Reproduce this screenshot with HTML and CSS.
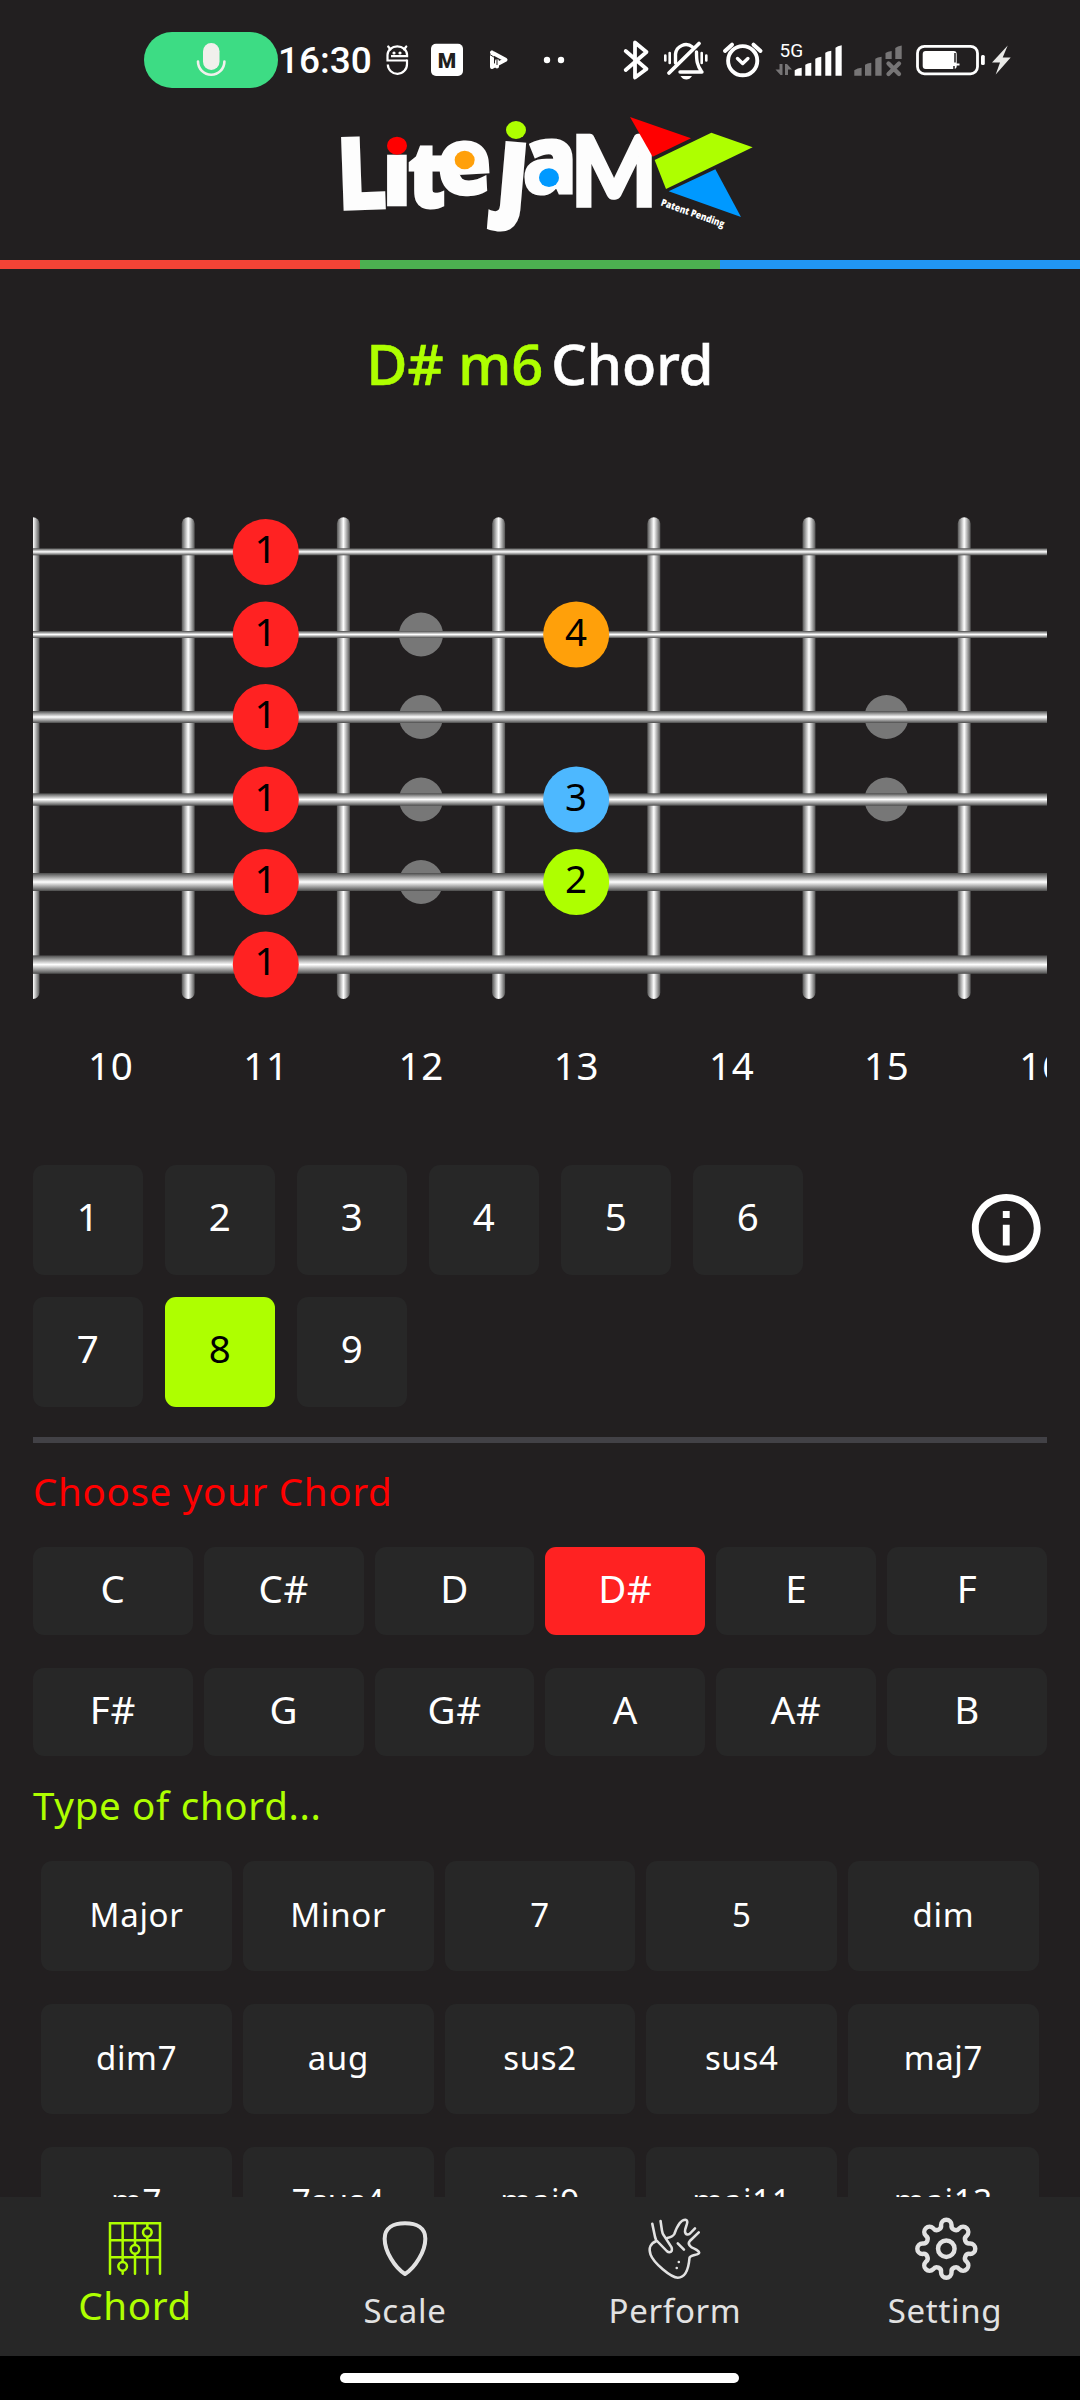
FILE: index.html
```html
<!DOCTYPE html>
<html lang="en">
<head>
<meta charset="utf-8">
<title>Litejam Chords</title>
<link rel="stylesheet" href="styles.css">
</head>
<body>
<div class="app">
  <header class="status">
    <div class="mic-pill">
      <svg width="32" height="36" viewBox="0 0 32 36">
        <rect x="8" y="1" width="16.500" height="27" rx="8.200" fill="#f1f0ec"/>
        <path d="M3 19.500a13.200 13.200 0 0 0 26.400 0" fill="none" stroke="#f1f0ec" stroke-width="2.600" stroke-linecap="round"/>
      </svg>
    </div>
    <span class="clock">16:30</span>
    <svg class="status-left" width="220" height="90" viewBox="380 20 220 90">
      <g fill="none" stroke="#fff" stroke-width="2.200">
        <path d="M407 60.500H387.500V55a9.800 8.600 0 0 1 19.600 0v1.200H391"/>
        <path d="M407 59.500v4.500a9.600 9.600 0 0 1-19.200 0.500"/>
        <path d="M390.500 49.500l-2.300-3M404 49.500l2.300-3" stroke-linecap="round"/>
        <circle cx="394" cy="53" r=".9" fill="#fff" stroke-width="1.400"/>
        <circle cx="400" cy="53" r=".9" fill="#fff" stroke-width="1.400"/>
      </g>
      <rect x="431" y="43.700" width="32" height="32.300" rx="5" fill="#fff"/>
      <text class="badge-m" x="447" y="67.500" text-anchor="middle">M</text>
      <path d="M492 52.500v14.500M492 52.500L505.500 59.800 492 67M497 66.500v-5.500" fill="none" stroke="#fff" stroke-width="4" stroke-linejoin="round" stroke-linecap="round"/>
      <path d="M489 54l8 5v6" fill="none" stroke="#221f20" stroke-width="1"/>
      <circle cx="547" cy="60" r="3.200" fill="#fff"/>
      <circle cx="561" cy="60" r="3.200" fill="#fff"/>
    </svg>
    <svg class="status-right" width="470" height="90" viewBox="590 20 470 90">
      <g fill="none" stroke="#fff" stroke-linecap="round" stroke-linejoin="round">
        <path d="M625.700 51L646.500 69 635 77.500V42.500L646.500 52 625.700 70" stroke-width="3.800"/>
        <path d="M675.500 63V54a10.500 10.500 0 0 1 17-7M696.500 52c0 9 .5 13 5 19.500M680 72h22" stroke-width="3.400"/>
        <path d="M669 73L699 43.500" stroke-width="3.800"/>
        <path d="M665.300 55.500v5M669.700 53v10M701.700 53v10M706.300 55.500v5" stroke-width="2.600"/>
        <circle cx="742.700" cy="60.700" r="14.600" stroke-width="3.900"/>
        <path d="M737.500 58.500l5.200 5 5.200-5" stroke-width="3.400"/>
        <path d="M725 51l7-6.300M753.500 44.700l7 6.300" stroke-width="4"/>
      </g>
      <path d="M680.500 76h11.500q-2.200 3.500-5.700 3.500t-5.800-3.500z" fill="#fff"/>
      <text class="net" x="779.500" y="57">5G</text>
      <g fill="#777576">
        <path d="M779.500 64h3v11h-2l-5-5.500h4zM785 75h3v-5.500h4l-5-5.500h-2z"/>
      </g>
      <g fill="#fff">
        <path d="M794.700 75.800v-5.500q3-2.200 7-2.500v8zM805.300 75.800v-11q2-1.500 6-2v13zM815.300 75.800v-17q2-1.500 6-2v19zM825.300 75.800v-23q2-1.500 6-2v25zM835.500 75.800v-28q2-1.800 6.200-2.500v30.500z"/>
      </g>
      <g fill="#777576">
        <path d="M854.300 75.800v-5.500q3-2.200 7.300-2.500v8zM865 75.800v-11q2-1.500 6.300-2v13zM875.300 75.800v-17q2-1.500 6.300-2v19zM885.500 59v-6q2-1.500 6.200-2v8zM895.300 59v-11q2-1.800 6.400-2.500v13.500z"/>
      </g>
      <path d="M888.500 63.500l10.500 10.500M899 63.500l-10.500 10.500" stroke="#777576" stroke-width="4.300" stroke-linecap="round"/>
      <rect x="917.500" y="46.300" width="60" height="27.500" rx="7" fill="none" stroke="#fff" stroke-width="2.800"/>
      <rect x="922.700" y="51" width="34" height="18" rx="3" fill="#fff"/>
      <path d="M955 53v9.500M954 66v3" stroke="#221f20" stroke-width="1.500"/>
      <path d="M955 64.500h4.500" stroke="#fff" stroke-width="2"/>
      <rect x="981" y="55" width="3.800" height="10" rx="1.500" fill="#fff"/>
      <path d="M1007.700 45.500L992 62.500h8l-4.300 12L1010.700 57.500h-8z" fill="#e9e9e7"/>
    </svg>
  </header>

  <div class="brand">
    <svg width="460" height="160" viewBox="0 0 1380 480" role="img" aria-label="Litejam, Patent Pending">
      <g class="wordmark">
        <text transform="translate(54 329) rotate(-2)" font-size="300" textLength="150" lengthAdjust="spacingAndGlyphs">L</text>
        <text transform="translate(187 316)" font-size="268" textLength="88" lengthAdjust="spacingAndGlyphs">ı</text>
        <text class="heavy" transform="translate(264 321)" font-size="272" textLength="112" lengthAdjust="spacingAndGlyphs">t</text>
        <text class="heavy" transform="translate(356 286) rotate(-3)" font-size="276" textLength="162" lengthAdjust="spacingAndGlyphs">e</text>
        <text class="heavy" transform="translate(526 309) rotate(5)" font-size="332" textLength="92" lengthAdjust="spacingAndGlyphs">ȷ</text>
        <text class="heavy" transform="translate(608 279)" font-size="280" textLength="162" lengthAdjust="spacingAndGlyphs">a</text>
        <text class="cap-m" transform="translate(753 319)" font-size="292" textLength="258" lengthAdjust="spacingAndGlyphs">M</text>
      </g>
      <ellipse cx="231" cy="137" rx="30" ry="27" fill="#f00"/>
      <ellipse cx="434" cy="180" rx="30" ry="28" fill="#ffa00a"/>
      <ellipse cx="588" cy="90" rx="30" ry="27" fill="#aeff00"/>
      <ellipse cx="687" cy="233" rx="30" ry="28" fill="#0099ff"/>
      <path d="M930 51l183 64-115 55z" fill="#f00"/>
      <path d="M1174 98l124 44-260 125-34-87z" fill="#aeff00"/>
      <path d="M1186 208l77 143-217-77z" fill="#0099ff"/>
      <text class="patent" transform="translate(1021 316) rotate(19.500)" textLength="200" lengthAdjust="spacingAndGlyphs">Patent Pending</text>
    </svg>
  </div>
  <div class="stripe"><i class="s-red"></i><i class="s-green"></i><i class="s-blue"></i></div>

  <main class="content">
    <h1 class="title"><span class="lime">D# m6</span><span>Chord</span></h1>

    <svg class="fretboard" width="1014" height="600" viewBox="33 500 1014 600">
      <defs>
        <linearGradient id="fret"><stop offset="0" stop-color="#555"/><stop offset=".5" stop-color="#fff"/><stop offset="1" stop-color="#555"/></linearGradient>
        <linearGradient id="wire" x2="0" y2="1"><stop offset="0" stop-color="#4c4c4c"/><stop offset=".5" stop-color="#fff"/><stop offset="1" stop-color="#4c4c4c"/></linearGradient>
      </defs>
      <g fill="url(#fret)">
        <rect x="26.500" y="517.300" width="13" height="481.700" rx="6.500"/>
        <rect x="181.700" y="517.300" width="13" height="481.700" rx="6.500"/>
        <rect x="336.900" y="517.300" width="13" height="481.700" rx="6.500"/>
        <rect x="492.100" y="517.300" width="13" height="481.700" rx="6.500"/>
        <rect x="647.300" y="517.300" width="13" height="481.700" rx="6.500"/>
        <rect x="802.500" y="517.300" width="13" height="481.700" rx="6.500"/>
        <rect x="957.700" y="517.300" width="13" height="481.700" rx="6.500"/>
      </g>
      <g fill="#777">
        <circle cx="421" cy="634.500" r="22"/><circle cx="421" cy="717" r="22"/><circle cx="421" cy="799.500" r="22"/><circle cx="421" cy="882" r="22"/>
        <circle cx="886.500" cy="717" r="22"/><circle cx="886.500" cy="799.500" r="22"/>
      </g>
      <g fill="url(#wire)">
        <rect x="33" y="548.300" width="1014" height="7"/>
        <rect x="33" y="631" width="1014" height="7"/>
        <rect x="33" y="711" width="1014" height="12"/>
        <rect x="33" y="793.300" width="1014" height="12.400"/>
        <rect x="33" y="873" width="1014" height="18"/>
        <rect x="33" y="955.400" width="1014" height="18.400"/>
      </g>
      <g fill="#ff2222">
        <circle cx="265.800" cy="552" r="33"/><circle cx="265.800" cy="634.500" r="33"/><circle cx="265.800" cy="717" r="33"/><circle cx="265.800" cy="799.500" r="33"/><circle cx="265.800" cy="882" r="33"/><circle cx="265.800" cy="964.500" r="33"/>
      </g>
      <circle cx="576.200" cy="634.500" r="33" fill="#ffa00a"/>
      <circle cx="576.200" cy="799.500" r="33" fill="#4db8ff"/>
      <circle cx="576.200" cy="882" r="33" fill="#aeff00"/>
      <g class="finger">
        <text x="265.500" y="562.700">1</text><text x="265.500" y="645.700">1</text><text x="265.500" y="727.700">1</text><text x="265.500" y="810.700">1</text><text x="265.500" y="892.700">1</text><text x="265.500" y="975.200">1</text>
        <text x="576" y="645.500">4</text><text x="576" y="810.500">3</text><text x="576" y="892.700">2</text>
      </g>
      <g class="fret-no">
        <text x="110.800" y="1079.700">10</text><text x="266" y="1079.700">11</text><text x="421.200" y="1079.700">12</text><text x="576.500" y="1079.700">13</text><text x="731.700" y="1079.700">14</text><text x="886.800" y="1079.700">15</text><text x="1042" y="1079.700">16</text>
      </g>
    </svg>

    <section class="positions">
      <div class="pos-list">
        <button class="key">1</button><button class="key">2</button><button class="key">3</button><button class="key">4</button><button class="key">5</button><button class="key">6</button><button class="key">7</button><button class="key on-lime">8</button><button class="key">9</button>
      </div>
      <svg class="info" width="82.500" height="82.500" viewBox="0 0 24 24" fill="#fff"><path d="M11 7h2v2h-2zM11 11h2v6h-2zM12 2C6.480 2 2 6.480 2 12s4.480 10 10 10 10-4.480 10-10S17.520 2 12 2zm0 18c-4.410 0-8-3.590-8-8s3.590-8 8-8 8 3.590 8 8-3.590 8-8 8z"/></svg>
    </section>

    <hr class="rule">
    <h2 class="label red">Choose your Chord</h2>
    <div class="roots">
      <button class="key">C</button><button class="key">C#</button><button class="key">D</button><button class="key on-red">D#</button><button class="key">E</button><button class="key">F</button>
      <button class="key">F#</button><button class="key">G</button><button class="key">G#</button><button class="key">A</button><button class="key">A#</button><button class="key">B</button>
    </div>
    <h2 class="label lime type-label">Type of chord...</h2>
    <div class="types">
      <button class="key">Major</button><button class="key">Minor</button><button class="key">7</button><button class="key">5</button><button class="key">dim</button>
      <button class="key">dim7</button><button class="key">aug</button><button class="key">sus2</button><button class="key">sus4</button><button class="key">maj7</button>
      <button class="key">m7</button><button class="key">7sus4</button><button class="key">maj9</button><button class="key">maj11</button><button class="key">maj13</button>
    </div>
  </main>

  <nav class="tabs">
    <a class="tab active">
      <svg width="70" height="70" viewBox="240 280 210 210" fill="none" stroke="#aeff00" stroke-width="7.500" stroke-linecap="round">
        <path d="M270 462V311H420V462M308 311V462M345 311V462M382 311V462M270 362H420M270 413H420"/>
        <g fill="#272727"><circle cx="382" cy="338" r="13"/><circle cx="345" cy="389" r="13"/><circle cx="308" cy="440" r="13"/></g>
      </svg>
      <span>Chord</span>
    </a>
    <a class="tab">
      <svg width="70" height="70" viewBox="1050 280 210 210" fill="none" stroke="#e2e2e2" stroke-width="12" stroke-linejoin="round">
        <path d="M1155 463C1125 445 1094 395 1094 357C1094 325 1120 311 1155 311C1190 311 1216 325 1216 357C1216 395 1185 445 1155 463Z"/>
      </svg>
      <span>Scale</span>
    </a>
    <a class="tab">
      <svg width="70" height="70" viewBox="290.300 280 203.300 210" preserveAspectRatio="none" fill="none" stroke="#e2e2e2" stroke-width="7.500" stroke-linecap="round" stroke-linejoin="round">
        <path d="M350 304L354 332Q355 341 360 348L382 383Q386 396 376 398Q372 398 368 394L337 361L334 352L326 312"/>
        <path d="M369 355Q385 352 390 343C397 322 408 300 422 300C436 304 419 325 421 336C423 347 432 347 437 340L450 326"/>
        <path d="M461 338L435 364C426 374 440 384 448 387Q455 390 461 396Q465 401 456 404C448 407 435 408 434 415C432 440 424 474 400 474C380 474 330 430 321 405C314 385 322 370 338 364"/>
        <path d="M400 371L418 390M403 427v.1M397 445v.1"/>
      </svg>
      <span>Perform</span>
    </a>
    <a class="tab">
      <svg width="70" height="70" viewBox="-36.300 -35.700 70 70" fill="none" stroke="#e2e2e2">
        <g transform="scale(.95)" stroke-width="4.700">
          <path d="M-5.500 -25A5.500 5.500 0 0 1 5.500 -25A4.600 4.600 0 0 0 13.790 -21.570A5.500 5.500 0 0 1 21.570 -13.790A4.600 4.600 0 0 0 25 -5.500A5.500 5.500 0 0 1 25 5.500A4.600 4.600 0 0 0 21.570 13.790A5.500 5.500 0 0 1 13.790 21.570A4.600 4.600 0 0 0 5.500 25A5.500 5.500 0 0 1 -5.500 25A4.600 4.600 0 0 0 -13.790 21.570A5.500 5.500 0 0 1 -21.570 13.790A4.600 4.600 0 0 0 -25 5.500A5.500 5.500 0 0 1 -25 -5.500A4.600 4.600 0 0 0 -21.570 -13.790A5.500 5.500 0 0 1 -13.790 -21.570A4.600 4.600 0 0 0 -5.500 -25Z"/>
          <circle r="8.700"/>
        </g>
      </svg>
      <span>Setting</span>
    </a>
  </nav>
  <footer class="gesture"><i></i></footer>
</div>
</body>
</html>
```

FILE: styles.css
```css
* { box-sizing: border-box; }
body { margin: 0; background: #221f20; color: #fff; font-family: "Noto Sans", sans-serif; }
.app { width: 1080px; height: 2400px; display: flex; flex-direction: column; overflow: hidden; }
svg { display: block; flex: none; }

.status { height: 100px; flex: none; display: flex; align-items: flex-start; padding-left: 144px; }
.mic-pill { width: 134px; height: 56px; margin-top: 32px; border-radius: 28px; background: #3ddc84; display: flex; align-items: center; justify-content: center; }
.clock { width: 102px; margin-top: 37px; font: 500 37px/48px Roboto, sans-serif; white-space: nowrap; }
.status-left { margin-top: 20px; margin-right: -10px; }
.status-right { margin-top: 20px; }
.badge-m { font: 900 21px Roboto, sans-serif; fill: #221f20; }
.net { font: 400 19px Roboto, sans-serif; fill: #fff; }

.brand { height: 160px; flex: none; padding-left: 320px; }
.wordmark { font-family: "Open Sans", "Noto Sans", sans-serif; font-weight: 800; fill: #fdfdfd; stroke: #fdfdfd; stroke-width: 7; }
.wordmark .heavy { stroke-width: 9; }
.wordmark .cap-m { font-family: Lato, sans-serif; font-weight: 900; stroke-width: 10; }
.patent { font: 800 30px "Open Sans", sans-serif; fill: #fff; }
.stripe { height: 9px; flex: none; display: grid; grid-template-columns: repeat(3, 1fr); }
.s-red { background: #f44336; }
.s-green { background: #4caf50; }
.s-blue { background: #2196f3; }

.content { flex: 1; min-height: 0; overflow: hidden; padding: 54px 33px 0; }
.title { display: flex; justify-content: center; gap: 8px; margin: 0 0 97px; font-size: 56px; line-height: 80px; font-weight: 500; -webkit-text-stroke: .6px currentColor; }
.lime { color: #aeff00; }
.red { color: #f00; }
.finger text, .fret-no text { font-size: 38.5px; text-anchor: middle; }
.finger { fill: #000; }
.fret-no { fill: #fff; letter-spacing: .6875px; }

.positions { display: flex; justify-content: space-between; align-items: flex-start; margin-top: 65px; }
.pos-list { display: grid; grid-template-columns: repeat(6, 110px); grid-auto-rows: 110px; gap: 22px; }
.info { margin-top: 22px; }
.key { border: 0; margin: 0; padding: 0 0 8px; border-radius: 11px; background: #272727; color: #fff; font: 400 38.5px/44px "Noto Sans", sans-serif; letter-spacing: .6875px; text-align: center; }
.on-lime { background: #aeff00; color: #000; }
.on-red { background: #ff2222; }

.rule { height: 6px; border: 0; margin: 30px 0 23px; background: #424146; }
.label { margin: 0 0 31px; font-size: 38.5px; line-height: 50px; font-weight: 400; letter-spacing: .6875px; }
.roots { display: grid; grid-template-columns: repeat(6, 1fr); grid-auto-rows: 88px; gap: 33px 11px; }
.roots .key { padding-bottom: 7px; }
.type-label { margin-top: 24px; }
.types { display: grid; grid-template-columns: repeat(5, 1fr); grid-auto-rows: 110px; gap: 33px 11px; padding: 0 8.25px; }
.types .key { font-size: 33px; padding-bottom: 3px; }

.tabs { height: 159px; flex: none; display: grid; grid-template-columns: repeat(4, 1fr); background: #272727; padding-top: 16px; }
.tab { display: flex; flex-direction: column; align-items: center; gap: 6px; color: #e2e2e2; font-size: 33px; line-height: 44px; letter-spacing: .6875px; }
.tab.active { color: #aeff00; font-size: 38.5px; gap: 0; }
.gesture { height: 44px; flex: none; background: #000; padding: 17px 0 0 340px; }
.gesture i { display: block; width: 399px; height: 10px; border-radius: 5px; background: #fff; }
```
